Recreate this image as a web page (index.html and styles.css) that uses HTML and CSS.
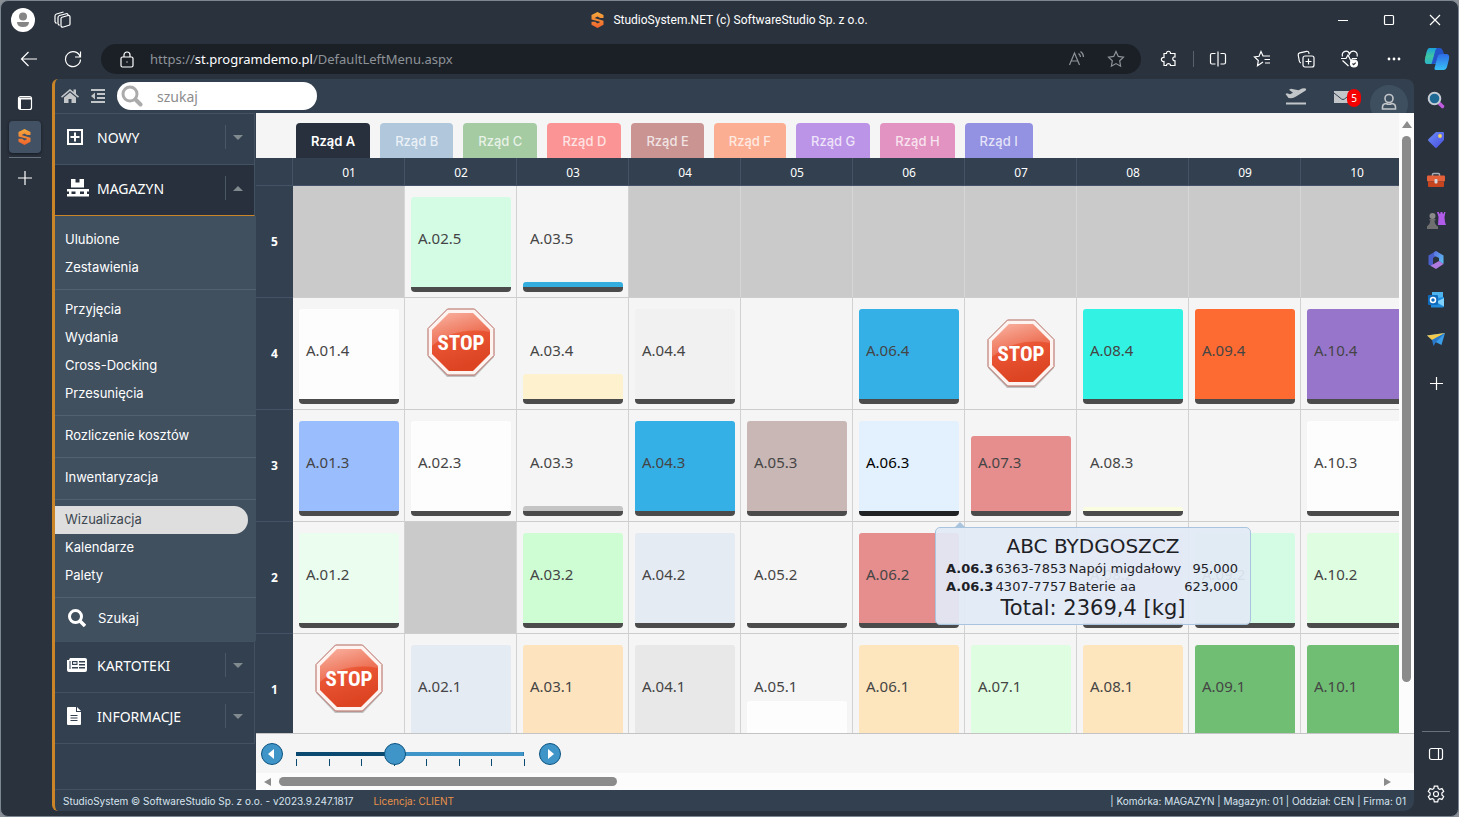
FILE: index.html
```html
<!DOCTYPE html>
<html lang="pl">
<head>
<meta charset="utf-8">
<title>StudioSystem.NET (c) SoftwareStudio Sp. z o.o.</title>
<link rel="stylesheet" href="styles.css">
</head>
<body>
<svg class="defs" width="0" height="0" aria-hidden="true">
  <defs>
    <linearGradient id="gOrange" x1="0" y1="0" x2="0" y2="1"><stop offset="0" stop-color="#f5a93c"/><stop offset="1" stop-color="#f0622d"/></linearGradient>
    <linearGradient id="gStop" x1="0" y1="0" x2="0.3" y2="1"><stop offset="0" stop-color="#f9a591"/><stop offset="0.5" stop-color="#ea5533"/><stop offset="1" stop-color="#dc4422"/></linearGradient>
    <linearGradient id="gCop1" x1="0" y1="0" x2="0" y2="1"><stop offset="0" stop-color="#1aa0dc"/><stop offset="0.5" stop-color="#3fc6a0"/><stop offset="1" stop-color="#2cb3c8"/></linearGradient>
    <linearGradient id="gCop2" x1="0" y1="0" x2="0" y2="1"><stop offset="0" stop-color="#2e6be8"/><stop offset="1" stop-color="#38c0f5"/></linearGradient>
    <linearGradient id="gTag" x1="0" y1="0" x2="1" y2="1"><stop offset="0" stop-color="#6a8cf5"/><stop offset="1" stop-color="#4a4fe0"/></linearGradient>
    <linearGradient id="gM365" x1="0" y1="0" x2="1" y2="1"><stop offset="0" stop-color="#5b6fe0"/><stop offset="1" stop-color="#5bc4f2"/></linearGradient>
    <symbol id="logo" viewBox="0 0 12 16"><path fill="url(#gOrange)" d="M6 0l6 3v3H8.500L6 4.600 3.600 5.800v.4L12 8.800v4L6 16l-6-3.200V9.800h3.600L6 11.400l2.400-1.200v-.4L0 7.400V3z"/></symbol>
    <symbol id="stop" viewBox="0 0 68 70">
      <path fill="#8d8d8d" opacity=".5" d="M20 3h28l19 19v27L48 69H20L1 49V22z"/>
      <path fill="#fdf3f0" stroke="#b3665c" d="M20.500 1h27L67 20.500v27L47.500 67h-27L1 47.500v-27z"/>
      <path fill="url(#gStop)" d="M22 5h24l17 17v24L46 63H22L5 46V22z"/>
      <path fill="#fff" opacity=".18" d="M22 5h24l17 17v2Q28 18 5 38V22z"/>
      <text class="stop-text" x="34" y="42" text-anchor="middle">STOP</text>
    </symbol>
  </defs>
</svg>
<div class="window">
  <header class="titlebar">
    <div class="title-left">
      <button class="profile" aria-label="Profil"><svg width="24" height="24" viewBox="0 0 24 24"><circle cx="12" cy="12" r="12" fill="#fff"/><circle cx="12" cy="8.500" r="4" fill="#858585"/><path fill="#858585" d="M6 14h12q0 5-6 5t-6-5z"/></svg></button>
      <button class="workspaces" aria-label="Obszary robocze"><svg class="line" width="18" height="18" viewBox="0 0 18 18"><path d="M7 7.500q0-1 1-1.300l6-1.700q2-.3 2 1.500v7q0 1-1 1.300l-5.500 1.700q-2.500.5-2.500-1.500zM4 13V6.500Q4 5 5.500 4.500L13 2.500M1 11V5q0-1.500 1.500-2l7-2M2.500 12.500L1 11M5.500 14.500L4 13M13 2.500q.8.500 1 1.500"/></svg></button>
    </div>
    <div class="title"><svg width="13" height="16"><use href="#logo"/></svg><span>StudioSystem.NET (c) SoftwareStudio Sp. z o.o.</span></div>
    <div class="win-buttons">
      <button aria-label="Minimalizuj"><svg class="line" width="12" height="12" viewBox="0 0 12 12"><path d="M1 6.500h10"/></svg></button>
      <button aria-label="Maksymalizuj"><svg class="line" width="12" height="12" viewBox="0 0 12 12"><rect x="1.500" y="1.500" width="9" height="9" rx="1"/></svg></button>
      <button aria-label="Zamknij"><svg class="line" width="12" height="12" viewBox="0 0 12 12"><path d="M1 1l10 10M11 1L1 11"/></svg></button>
    </div>
  </header>
  <nav class="toolbar">
    <button aria-label="Wstecz"><svg class="line" width="18" height="18" viewBox="0 0 18 18"><path d="M17 9H1.500M8.500 2l-7 7 7 7"/></svg></button>
    <button aria-label="Odśwież"><svg class="line" width="18" height="18" viewBox="0 0 18 18"><path d="M16.200 7A7.500 7.500 0 1 0 16.500 9.500M16.500 1.500V7H11"/></svg></button>
    <div class="address">
      <svg class="line" width="14" height="17" viewBox="0 0 14 17"><rect x="1" y="6" width="12" height="10" rx="1.500"/><path d="M4 6V4a3 3 0 0 1 6 0v2M7 10.500v1"/></svg>
      <span class="url">https://<b>st.programdemo.pl</b>/DefaultLeftMenu.aspx</span>
      <button class="dim" aria-label="Czytaj na głos"><svg class="line" width="18" height="18" viewBox="0 0 18 18"><path d="M1.500 15L6.500 3l5 12M3.200 11h6.600M10.500 3.500q2 1.500 2 3.500M12.500 1.500q3 2 3 5.500"/></svg></button>
      <button class="dim" aria-label="Dodaj do ulubionych"><svg class="line" width="18" height="18" viewBox="0 0 18 18"><path d="M9 1.500l2.300 4.900 5.200.7-3.800 3.700.9 5.400L9 13.600l-4.600 2.600.9-5.400L1.500 7.100l5.200-.7z"/></svg></button>
    </div>
    <button aria-label="Rozszerzenia"><svg class="line" width="18" height="18" viewBox="0 0 18 18"><path d="M4 3.500h2.500c-.5-3 4.500-3 4 0H15V7c-3-.5-3 4 0 3.800v4.700h-4.500c.3-2.500-4.300-2.500-4 0H4v-4c-3.500.5-3.500-4.500 0-4z"/></svg></button>
    <span class="tool-sep"></span>
    <button aria-label="Podziel ekran"><svg class="line" width="18" height="18" viewBox="0 0 18 18"><path d="M9 1.500v15M6.500 3.500H3q-1.500 0-1.500 1.500v7.500q0 1.500 1.500 1.500h3.500M11.500 3.500H15q1.500 0 1.500 1.500v7.500q0 1.500-1.500 1.500h-3.500"/></svg></button>
    <button aria-label="Ulubione strony"><svg class="line" width="18" height="18" viewBox="0 0 18 18"><path d="M10 12l-5.500 3.800.8-5.300L1.500 7l4.500-.7L8 1.500l2 4.500h7M11.500 9.500H17M12 13h5"/></svg></button>
    <button aria-label="Kolekcje"><svg class="line" width="18" height="18" viewBox="0 0 18 18"><rect x="6" y="6" width="11" height="11" rx="2"/><path d="M11.500 8.500v6M8.500 11.500h6M4 13Q2.500 12.500 2.300 11L1.200 5Q1 3.200 2.700 2.800L9.500 1.300q2-.3 2.400 1.500l.2 1"/></svg></button>
    <button aria-label="Podstawowe elementy przeglądarki"><svg class="line" width="20" height="18" viewBox="0 0 20 18"><path d="M2.500 6.500C1 .5 8-.5 9.500 4 11.500-.5 18.500.500 17 6.500M2.500 10.500l6 5.500M1 8.500h5l2-3.500 3 6 1.500-2.500H17"/><circle cx="14" cy="13.500" r="3.500" fill="#fff"/><path stroke="#2a323d" d="M12.500 13.500l1.200 1.200 2-2"/></svg></button>
    <button aria-label="Więcej"><svg width="16" height="4" viewBox="0 0 16 4"><circle cx="3" cy="2" r="1.400" fill="#fff"/><circle cx="8" cy="2" r="1.400" fill="#fff"/><circle cx="13" cy="2" r="1.400" fill="#fff"/></svg></button>
    <button class="copilot" aria-label="Copilot"><svg width="26" height="24" viewBox="0 0 26 24"><path fill="url(#gCop1)" d="M6 1h9q2 0 1.500 2L13 15q-.5 2-3 2H4Q0 17 1 12L3 4q.8-3 3-3z"/><path fill="#2455c8" d="M12 1h4q2 0 3 3l1 3h-3q-2 0-2.500 2l-2 6q-.5 2-3 2l-2 0z"/><path fill="url(#gCop2)" d="M17 7h5q4 0 3 5l-2 8q-.8 3-3 3h-8q-2 0-1.500-2L14 9q.5-2 3-2z"/><path fill="url(#gCop1)" d="M6 1h7q-2 1-2.500 4L8 14q-.8 3-3 3H4Q0 17 1 12L3 4q.8-3 3-3z"/></svg></button>
  </nav>
  <div class="stage">
    <aside class="rail rail-left">
      <button class="tab-action" aria-label="Karty pionowe"><svg class="line" width="16" height="16" viewBox="0 0 16 16"><rect x="1.500" y="1.500" width="13" height="13" rx="2"/><path stroke-width="2" d="M2 3.500h12M3 3v11"/></svg></button>
      <button class="tab-active" aria-label="StudioSystem"><svg width="13" height="16"><use href="#logo"/></svg></button>
      <hr>
      <button class="tab-new" aria-label="Nowa karta"><svg class="line" width="14" height="14" viewBox="0 0 14 14"><path d="M7 0v14M0 7h14"/></svg></button>
    </aside>

    <div class="app">
      <header class="app-bar">
        <a href="#" class="bar-icon" aria-label="Start"><svg width="18" height="16" viewBox="0 0 18 16"><path fill="#c3c6c9" d="M9 1L0 8.500l1 1.200L9 3l8 6.700 1-1.200-3-2.500V1.500h-2.500V4zM9 4.500L3 9.500V15h4.500v-4h3v4H15V9.500z"/></svg></a>
        <button class="bar-icon" aria-label="Zwiń menu"><svg width="16" height="14" viewBox="0 0 16 14"><path fill="#c3c6c9" d="M1 0h14v2H1zM7 4h8v2H7zM7 8h8v2H7zM1 12h14v2H1zM5 3.500v7L1 7z"/></svg></button>
        <label class="search"><svg width="22" height="22" viewBox="0 0 22 22"><circle cx="9" cy="9" r="7" fill="none" stroke="#ababab" stroke-width="3"/><path stroke="#ababab" stroke-width="4" stroke-linecap="round" d="M15 15l4.500 4.500"/></svg><input type="text" placeholder="szukaj" aria-label="szukaj"></label>
        <div class="bar-right">
          <a href="#" class="plane" aria-label="Wyloty"><svg width="22" height="17" viewBox="0 0 22 17"><path fill="#c3c6c9" d="M1 14.500h20v2H1zM.5 6l1.500-.8 3 1 3-1.400-4-3 2-1 7.500 1.500L17 .6q3-1 4 .2.500 1.500-1.500 2.500L11 8.500q-2.500 1.500-5 1.700l-2.500-.2z"/></svg></a>
          <a href="#" class="mail" aria-label="Wiadomości"><svg width="18" height="13" viewBox="0 0 18 13"><path fill="#c3c6c9" d="M0 1h18v12H0z"/><path fill="none" stroke="#32404f" d="M0 3l7.500 6q1.500 1 3 0L18 3"/></svg><span class="badge">5</span></a>
          <button class="user" aria-label="Użytkownik"><svg width="16" height="18" viewBox="0 0 16 18"><g fill="none" stroke="#c3c6c9" stroke-width="1.600"><circle cx="8" cy="5.500" r="4"/><path d="M1.500 16v-2q0-3 3.500-3.500 3 1.500 6 0 3.500.5 3.500 3.500v2z"/></g></svg></button>
        </div>
      </header>

      <div class="workspace">
        <nav class="menu">
          <button class="menu-head"><svg width="16" height="16" viewBox="0 0 16 16"><path fill="none" stroke="#fff" stroke-width="2" d="M1 1h14v14H1zM8 3.500v9M3.500 8h9"/></svg><span>NOWY</span><i class="arrow down"></i></button>
          <button class="menu-head open"><svg width="22" height="18" viewBox="0 0 22 18"><path fill="#fff" d="M4 0h4.500v3.500h4V0H17v8.500H4zM0 10h22v2.500h-2V15h2v2.500H0V15h2v-2.500H0z"/><path fill="#27303c" d="M4.500 12.500h4V15h-4zM13 12.500h4V15h-4z"/></svg><span>MAGAZYN</span><i class="arrow up"></i></button>
          <div class="submenu">
            <ul><li><a href="#">Ulubione</a></li><li><a href="#">Zestawienia</a></li></ul>
            <ul><li><a href="#">Przyjęcia</a></li><li><a href="#">Wydania</a></li><li><a href="#">Cross-Docking</a></li><li><a href="#">Przesunięcia</a></li></ul>
            <ul><li><a href="#">Rozliczenie kosztów</a></li></ul>
            <ul><li><a href="#">Inwentaryzacja</a></li></ul>
            <ul><li><a href="#" class="current">Wizualizacja</a></li><li><a href="#">Kalendarze</a></li><li><a href="#">Palety</a></li></ul>
            <a href="#" class="find"><svg width="18" height="18" viewBox="0 0 18 18"><circle cx="7.500" cy="7.500" r="6" fill="none" stroke="#fff" stroke-width="3"/><path stroke="#fff" stroke-width="3.500" d="M11.500 11.500l5.500 5.500"/></svg><span>Szukaj</span></a>
          </div>
          <button class="menu-head"><svg width="20" height="14" viewBox="0 0 20 14"><path fill="#fff" d="M3 0h15q2 0 2 2v10q0 2-2 2H2q-2 0-2-2V2h2z"/><path fill="#32404f" d="M2.500 3h1v8h-1zM5 3h5.500v4H5zM12 3h6v1.500h-6zM12 6h6v1.500h-6zM5 9h6v1.500H5zM12 9h6v1.500h-6z"/><path fill="#fff" d="M6 4.200h3.500v1.600H6z"/></svg><span>KARTOTEKI</span><i class="arrow down"></i></button>
          <button class="menu-head"><svg width="14" height="18" viewBox="0 0 14 18"><path fill="#fff" d="M1 0h8v5h5v12q0 1-1 1H1q-1 0-1-1V1q0-1 1-1zM10 0l4 4h-4z"/><path stroke="#32404f" d="M3.500 8.500h7M3.500 11h7M3.500 13.500h7"/></svg><span>INFORMACJE</span><i class="arrow down"></i></button>
        </nav>

        <main class="content">
          <div class="board">
            <div class="board-main">
              <div class="tabs" role="tablist">
                <button role="tab" aria-selected="true" class="tab a">Rząd A</button>
                <button role="tab" class="tab b">Rząd B</button>
                <button role="tab" class="tab c">Rząd C</button>
                <button role="tab" class="tab d">Rząd D</button>
                <button role="tab" class="tab e">Rząd E</button>
                <button role="tab" class="tab f">Rząd F</button>
                <button role="tab" class="tab g">Rząd G</button>
                <button role="tab" class="tab h">Rząd H</button>
                <button role="tab" class="tab i">Rząd I</button>
              </div>
              <div class="viewport">
                <table class="rack">
                  <colgroup><col class="level"><col span="10" class="slot"></colgroup>
                  <thead><tr><th></th><th>01</th><th>02</th><th>03</th><th>04</th><th>05</th><th>06</th><th>07</th><th>08</th><th>09</th><th>10</th></tr></thead>
                  <tbody>
                    <tr><th>5</th>
                      <td class="off"></td>
                      <td><div class="tile" style="--c:#d4fce5;--f:90px"><span>A.02.5</span></div></td>
                      <td><div class="tile" style="--c:#34aedf;--f:5px"><span>A.03.5</span></div></td>
                      <td class="off"></td><td class="off"></td><td class="off"></td><td class="off"></td><td class="off"></td><td class="off"></td><td class="off"></td></tr>
                    <tr><th>4</th>
                      <td><div class="tile" style="--c:#fdfdfd;--f:90px"><span>A.01.4</span></div></td>
                      <td><svg class="stop" role="img" aria-label="STOP"><use href="#stop"/></svg></td>
                      <td><div class="tile" style="--c:#fdf2cd;--f:25px"><span>A.03.4</span></div></td>
                      <td><div class="tile" style="--c:#f1f1f1;--f:90px"><span>A.04.4</span></div></td>
                      <td></td>
                      <td><div class="tile" style="--c:#34b0e6;--f:90px"><span>A.06.4</span></div></td>
                      <td><svg class="stop low" role="img" aria-label="STOP"><use href="#stop"/></svg></td>
                      <td><div class="tile" style="--c:#32f2e3;--f:90px"><span>A.08.4</span></div></td>
                      <td><div class="tile" style="--c:#fd6b32;--f:90px"><span>A.09.4</span></div></td>
                      <td><div class="tile" style="--c:#9775cb;--f:90px"><span>A.10.4</span></div></td></tr>
                    <tr><th>3</th>
                      <td><div class="tile" style="--c:#99bdfd;--f:90px"><span>A.01.3</span></div></td>
                      <td><div class="tile" style="--c:#fdfdfd;--f:90px"><span>A.02.3</span></div></td>
                      <td><div class="tile" style="--c:#c4c4c4;--f:5px"><span>A.03.3</span></div></td>
                      <td><div class="tile" style="--c:#34b0e6;--f:90px"><span>A.04.3</span></div></td>
                      <td><div class="tile" style="--c:#c8b7b4;--f:90px"><span>A.05.3</span></div></td>
                      <td class="hovered"><div class="tile" style="--c:#e2f1fd;--f:90px"><span>A.06.3</span></div>
                        <div class="tip" role="tooltip">
                          <p>ABC BYDGOSZCZ</p>
                          <table>
                            <tr><th>A.06.3</th><td>6363-7853</td><td>Napój migdałowy</td><td class="num">95,000</td></tr>
                            <tr><th>A.06.3</th><td>4307-7757</td><td>Baterie aa</td><td class="num">623,000</td></tr>
                          </table>
                          <p class="total">Total: 2369,4 [kg]</p>
                        </div></td>
                      <td><div class="tile" style="--c:#e68d8d;--f:75px"><span>A.07.3</span></div></td>
                      <td><div class="tile" style="--c:#fafde0;--f:4px"><span>A.08.3</span></div></td>
                      <td></td>
                      <td><div class="tile" style="--c:#fdfdfd;--f:90px"><span>A.10.3</span></div></td></tr>
                    <tr><th>2</th>
                      <td><div class="tile" style="--c:#eafdef;--f:90px"><span>A.01.2</span></div></td>
                      <td class="off"></td>
                      <td><div class="tile" style="--c:#cefdd4;--f:90px"><span>A.03.2</span></div></td>
                      <td><div class="tile" style="--c:#e5ebf3;--f:90px"><span>A.04.2</span></div></td>
                      <td><div class="tile" style="--c:#f5f5f5;--f:0px"><span>A.05.2</span></div></td>
                      <td><div class="tile" style="--c:#e68d8d;--f:90px"><span>A.06.2</span></div></td>
                      <td></td>
                      <td><div class="tile" style="--c:#f9eef2;--f:90px"><span>A.08.2</span></div></td>
                      <td><div class="tile" style="--c:#d4fce5;--f:90px"><span>A.09.2</span></div></td>
                      <td><div class="tile" style="--c:#dffde0;--f:90px"><span>A.10.2</span></div></td></tr>
                    <tr><th>1</th>
                      <td><svg class="stop" role="img" aria-label="STOP"><use href="#stop"/></svg></td>
                      <td><div class="tile" style="--c:#e5ebf3;--f:90px"><span>A.02.1</span></div></td>
                      <td><div class="tile" style="--c:#fde4bf;--f:90px"><span>A.03.1</span></div></td>
                      <td><div class="tile" style="--c:#e8e8e8;--f:90px"><span>A.04.1</span></div></td>
                      <td><div class="tile" style="--c:#fdfdfd;--f:34px"><span>A.05.1</span></div></td>
                      <td><div class="tile" style="--c:#fde6bd;--f:90px"><span>A.06.1</span></div></td>
                      <td><div class="tile" style="--c:#dffde0;--f:90px"><span>A.07.1</span></div></td>
                      <td><div class="tile" style="--c:#fde6bd;--f:90px"><span>A.08.1</span></div></td>
                      <td><div class="tile" style="--c:#70be73;--f:90px"><span>A.09.1</span></div></td>
                      <td><div class="tile" style="--c:#70be73;--f:90px"><span>A.10.1</span></div></td></tr>
                  </tbody>
                </table>
              </div>
            </div>
            <div class="vscroll"><i class="cap"></i><div class="thumb"></div></div>
          </div>
          <div class="zoombar">
            <button class="round" aria-label="Zmniejsz"><svg width="8" height="10" viewBox="0 0 8 10"><path fill="#fff" d="M6 0v10L0 5z"/></svg></button>
            <div class="range"><input type="range" min="0" max="7" value="3" aria-label="Powiększenie"><div class="ticks"><i></i><i></i><i></i><i></i><i></i><i></i><i></i><i></i></div></div>
            <button class="round" aria-label="Powiększ"><svg width="8" height="10" viewBox="0 0 8 10"><path fill="#fff" d="M2 0v10l6-5z"/></svg></button>
          </div>
          <div class="hscroll"><i class="cap left"></i><div class="lane"><div class="thumb"></div></div><i class="cap right"></i></div>
        </main>
      </div>

      <footer class="status">
        <span>StudioSystem © SoftwareStudio Sp. z o.o. - v2023.9.247.1817</span>
        <span class="licence">Licencja: CLIENT</span>
        <span class="where">| Komórka: MAGAZYN | Magazyn: 01 | Oddział: CEN | Firma: 01</span>
      </footer>
    </div>

    <aside class="rail rail-right">
      <button aria-label="Szukaj"><svg width="18" height="18" viewBox="0 0 18 18"><path stroke="#c05be0" stroke-width="3.500" stroke-linecap="round" d="M12.500 12.500l3 3"/><circle cx="7.500" cy="7.500" r="5.800" fill="#1e6a94" stroke="#c4ccd4" stroke-width="2"/></svg></button>
      <button aria-label="Zakupy"><svg width="18" height="18" viewBox="0 0 18 18"><path fill="url(#gTag)" d="M9 1h7q1 0 1 1v7l-7 7.500q-1 .8-2 0L1.500 10q-1-1 0-2z"/><circle cx="13" cy="5" r="1.900" fill="#f8d45c"/></svg></button>
      <button aria-label="Narzędzia"><svg width="18" height="18" viewBox="0 0 18 18"><path fill="none" stroke="#a7adb3" stroke-width="1.500" d="M5.500 5V3.500Q5.500 2.500 6.500 2.500h5q1 0 1 1V5"/><rect y="4.500" width="18" height="6" rx="1" fill="#e5613a"/><path fill="#c8441f" d="M1 10.500h16V15q0 1-1 1H2q-1 0-1-1z"/><rect x="7.500" y="8" width="3" height="4.500" rx="1" fill="#d5d8dc"/></svg></button>
      <button aria-label="Gry"><svg width="20" height="18" viewBox="0 0 20 18"><path fill="#b05ce8" d="M11 1h2v1.500h1.500V1h2v1.500H18V1h1.500L18.500 6l.5 5 1 3h-8l.5-8z"/><circle cx="6.500" cy="5" r="3" fill="#8a8a8a"/><path fill="#6f6f6f" d="M3.500 8h6v1.500h-1q0 4 3.500 6V18H1v-2.500q3-2 3.500-6h-1z"/></svg></button>
      <button aria-label="Microsoft 365"><svg width="18" height="18" viewBox="0 0 18 18"><path fill="#4a5fc9" d="M9 0L1.500 4.500v9L6 16V7l5-3z"/><path fill="url(#gM365)" d="M7 1.200L9 0l7.500 4.500V13L12 10V7L7 4.500z"/><path fill="#b07be0" d="M16.500 13L9 18l-5.500-3.300L12 10z"/></svg></button>
      <button aria-label="Outlook"><svg width="18" height="18" viewBox="0 0 18 18"><path fill="#4db4f0" d="M5 1h11v8H5z"/><path fill="#1f8bdc" d="M4 8l13-2v9q0 1.500-1.500 1.500H4z"/><path fill="#7fd0fa" d="M17 7v8.500L9 11z"/><rect x="1" y="4" width="10" height="10" rx="1" fill="#0f6cbd"/><circle cx="6" cy="9" r="2.500" fill="none" stroke="#fff" stroke-width="1.500"/></svg></button>
      <button aria-label="Upuść"><svg width="18" height="16" viewBox="0 0 18 16"><path fill="#3a9de8" d="M0 3.500L18 1l-3.500 12-6-3z"/><path fill="#f2c94c" d="M0 3.500L18 1 5 8z"/><path fill="#2a78c8" d="M5 8l13-7L9 10l-2.500 4z"/></svg></button>
      <button aria-label="Dostosuj"><svg class="line" width="13" height="13" viewBox="0 0 13 13"><path d="M6.500 0v13M0 6.500h13"/></svg></button>
      <hr>
      <button aria-label="Ukryj pasek boczny"><svg class="line" width="16" height="14" viewBox="0 0 16 14"><rect x="1.500" y="1.500" width="13" height="11" rx="2"/><path d="M10.500 1.500v11"/></svg></button>
      <button aria-label="Ustawienia"><svg class="line" width="18" height="18" viewBox="0 0 18 18"><circle cx="9" cy="9" r="2.500"/><path d="M7.300 1.200h3.400l.5 2.300 1.500.9 2.300-.8 1.700 2.900-1.800 1.600v1.800l1.800 1.600-1.700 2.900-2.300-.8-1.500.9-.5 2.300H7.300l-.5-2.300-1.500-.9-2.300.8-1.700-2.900 1.800-1.600V8.100L1.300 6.500 3 3.600l2.300.8 1.500-.9z"/></svg></button>
    </aside>
  </div>
</div>
</body>
</html>
```

FILE: styles.css
```css
* { box-sizing: border-box; }
body { margin: 0; background: #8b9096; font-family: "Noto Sans", sans-serif; color: #fff; }
button { font: inherit; color: inherit; background: none; border: 0; padding: 0; display: flex; align-items: center; justify-content: center; }
a { color: inherit; text-decoration: none; }
ul { list-style: none; margin: 0; padding: 0; }
hr { border: 0; border-top: 1px solid #68717b; margin: 0; }
svg { flex: none; display: block; }
.defs { position: absolute; }
.line { fill: none; stroke: #fff; stroke-width: 1.2; }

.window { height: 100vh; display: flex; flex-direction: column; background: #2a323d; border: 1px solid #7d8791; border-radius: 8px; overflow: hidden; }

/* browser chrome */
.titlebar { height: 38px; flex: none; display: grid; grid-template-columns: 1fr auto 1fr; align-items: center; }
.title-left { display: flex; gap: 19px; padding-left: 10px; align-items: center; }
.title { display: flex; align-items: center; gap: 9px; font: 12px Roboto, sans-serif; }
.win-buttons { display: flex; justify-content: flex-end; }
.win-buttons button { width: 46px; height: 38px; }
.toolbar { height: 40px; flex: none; display: flex; align-items: center; padding-left: 6px; }
.toolbar button { width: 44px; height: 32px; }
.toolbar .copilot { width: 42px; }
.toolbar .address { flex: 1; height: 30px; display: flex; align-items: center; margin: 0 6px; padding: 0 6px 0 19px; background: #1b2027; border-radius: 15px; }
.address .url { flex: 1; padding-left: 16px; font-size: 13px; color: #8e9398; }
.address b { color: #fff; font-weight: 400; }
.address .dim { width: 39px; }
.address .dim .line { stroke: #8e9398; }
.tool-sep { width: 1px; height: 16px; margin: 0 2px; background: #59616b; }

.stage { flex: 1; min-height: 0; display: flex; }
.rail { flex: none; display: flex; flex-direction: column; align-items: center; }
.rail-left { width: 51px; padding-right: 4px; }
.rail-left .tab-action { width: 32px; height: 32px; margin-top: 8px; }
.rail-left .tab-active { width: 32px; height: 32px; margin-top: 2px; background: #435164; border-radius: 4px; box-shadow: 0 1px 3px #151a20; }
.rail-left hr { width: 32px; margin: 4px 0; }
.rail-left .tab-new { width: 32px; height: 32px; }
.rail-right { width: 44px; padding-top: 1px; }
.rail-right button { width: 40px; height: 40px; flex: none; }
.rail-right hr { width: 28px; margin-top: auto; margin-bottom: 2px; }
.rail-right button:nth-child(8) { margin-top: 3px; }
.rail-right button:last-child { margin-bottom: 2px; }

/* application */
.app { flex: 1; min-width: 0; display: flex; flex-direction: column; margin-bottom: 5px; background: #32404f; border-left: 3px solid #c98528; border-radius: 6px 8px 10px 6px; overflow: hidden; }
.app-bar { height: 34px; flex: none; display: flex; align-items: center; padding-left: 6px; }
.bar-icon { width: 18px; margin-right: 10px; }
.search { width: 200px; height: 28px; display: flex; align-items: center; padding-left: 4px; gap: 14px; background: #fff; border-radius: 14px; }
.search input { width: 140px; border: 0; outline: 0; padding: 1px 0 0; background: none; font: 14px "Noto Sans", sans-serif; color: #333; }
.search input::placeholder { color: #8c8c8c; opacity: 1; }
.bar-right { margin-left: auto; align-self: stretch; display: flex; align-items: center; }
.plane { margin-right: 27px; }
.mail { display: flex; align-items: center; }
.badge { margin-left: -5px; width: 14px; height: 18px; border-radius: 7px; background: #f50000; font-size: 10px; line-height: 18px; text-align: center; position: relative; top: 2px; }
.user { width: 38px; height: 38px; margin: 6px 6px 0 9px; align-self: flex-start; border-radius: 50%; background: #3e4f60; }
.user svg { margin-top: -4px; }
.workspace { flex: 1; min-height: 0; display: flex; }

.menu { width: 201px; flex: none; border-bottom: 1px solid #435261; overflow: hidden; }
.menu-head { width: 200px; height: 51px; justify-content: flex-start; padding: 0 0 4px 12px; border: solid #435261; border-width: 1px 1px 0 0; font-size: 14px; }
.menu-head:last-child { height: 52px; border-bottom-width: 1px; }
.menu-head svg { margin-right: auto; }
.menu-head span { width: 128px; text-align: left; }
.menu-head.open { height: 52px; background: #27303c; border-bottom: 1px solid #c98528; }
.arrow { width: 29px; height: 24px; border-left: 1px solid #4a5866; display: flex; align-items: center; padding-left: 7px; }
.arrow::before { content: ""; border: 5px solid transparent; }
.arrow.down::before { border-top-color: #818a8f; border-bottom: 0; }
.arrow.up::before { border-bottom-color: #818a8f; border-top: 0; }
.submenu { background: #40505f; font: 13px Inter, sans-serif; }
.submenu ul { padding: 6px 8px 7px 0; border-bottom: 1px solid #52616f; }
.submenu ul:first-child { padding-top: 10px; }
.submenu li a { display: block; height: 28px; line-height: 27px; padding-left: 10px; }
.submenu .current { background: #dedede; color: #3c4650; border-radius: 0 14px 14px 0; }
.find { height: 43px; display: flex; align-items: center; gap: 12px; padding: 0 0 4px 13px; }

.content { flex: 1; min-width: 0; display: flex; flex-direction: column; background: #f5f5f5; }
.board { flex: 1; min-height: 0; display: flex; border-bottom: 1px solid #c4c4c4; }
.board-main { flex: 1; min-width: 0; display: flex; flex-direction: column; }
.tabs { display: flex; gap: 10px; padding: 10px 0 0 40px; }
.tab { height: 35px; padding: 0 15px; border-radius: 4px 4px 0 0; font: 500 13px Inter, sans-serif; color: rgba(255,255,255,.75); }
.tab.a { background: #27303c; color: #fff; font-weight: 600; }
.tab.b { background: #b0c7dc; }
.tab.c { background: #a4cba2; }
.tab.d { background: #fb9595; }
.tab.e { background: #c99492; }
.tab.f { background: #fcae92; }
.tab.g { background: #bb94e7; }
.tab.h { background: #e293c1; }
.tab.i { background: #9391e1; }
.viewport { flex: 1; min-height: 0; overflow: hidden; }
.rack { width: 1157px; table-layout: fixed; border-collapse: separate; border-spacing: 0; }
.level { width: 37px; }
.slot { width: 112px; }
.rack > thead th { height: 28px; padding: 1px 0 0 1px; background: #32404f; border-right: 1px solid #435266; border-bottom: 1px solid #435266; font-size: 12px; font-weight: 400; }
.rack > tbody > tr > th { height: 112px; padding: 0; background: #32404f; border-bottom: 1px solid #435266; font-size: 12px; font-weight: 700; }
.rack > tbody > tr > td { height: 112px; padding: 11px 5px 5px 6px; border-right: 1px solid #d2d2d2; border-bottom: 1px solid #cdcdcd; vertical-align: top; }
.rack > tbody > tr > td.off { background: #cacaca; border-right-color: #d6d6d6; }
.tile { height: 95px; display: grid; border-bottom: 5px solid #4b4b4b; border-radius: 4px; color: #454545; font-size: 15px; }
.tile::before { content: ""; grid-area: 1 / 1; align-self: end; height: var(--f); background: var(--c); border-radius: 3px 3px 0 0; }
.tile span { grid-area: 1 / 1; align-self: center; padding: 0 0 8px 7px; }
.hovered { position: relative; }
.hovered .tile { color: #000; border-bottom-color: #202224; }
.stop { width: 68px; height: 70px; margin: -1px auto 0; }
.stop.low { margin-top: 10px; }
.stop-text { font: 700 21px "Liberation Sans Narrow", "Roboto Condensed", Roboto, sans-serif; fill: #fff; }

.tip { position: absolute; z-index: 2; left: 82px; top: 117px; width: 316px; padding: 6px 9px 4px; background: rgba(225,233,245,.93); border: 1px solid #a9c4de; border-radius: 5px; color: #1d2126; font: 13px "DejaVu Sans", sans-serif; }
.tip::before { content: ""; position: absolute; left: 19px; top: -6px; border: 5px solid transparent; border-top: 0; border-bottom-color: #a9c4de; }
.tip p { margin: 0; font-size: 20px; line-height: 24px; text-align: center; }
.tip .total { font-size: 21px; }
.tip table { width: 100%; margin-top: 2px; border-collapse: collapse; line-height: 18px; }
.tip th, .tip td { padding: 0 1px; text-align: left; white-space: nowrap; }
.tip .num { padding-right: 3px; text-align: right; }

.vscroll { width: 15px; padding: 8px 3px 51px; background: #fcfcfc; display: flex; flex-direction: column; align-items: center; }
.cap { border: 5px solid transparent; border-top: 0; border-bottom: 7px solid #8b8b8b; flex: none; }
.cap.left { border: 4px solid transparent; border-left: 0; border-right: 7px solid #8b8b8b; }
.cap.right { border: 4px solid transparent; border-right: 0; border-left: 7px solid #8b8b8b; }
.vscroll .thumb { flex: 1; width: 9px; margin-top: 8px; background: #8b8b8b; border-radius: 5px; }
.zoombar { height: 39px; flex: none; display: flex; align-items: center; padding-left: 5px; }
.round { width: 22px; height: 22px; border: 1px solid #0b5480; border-radius: 50%; background: #3f94c8; }
.range { width: 230px; display: grid; margin: 0 13px; }
.range > * { grid-area: 1 / 1; }
.range input { appearance: none; width: 228px; height: 22px; margin: 0; background: linear-gradient(#3f94c8, #3f94c8) no-repeat 100% 50% / 56% 4px, linear-gradient(#0b4a70, #0b4a70) no-repeat 0 50% / 100% 4px; z-index: 1; }
.range input::-webkit-slider-thumb { appearance: none; width: 22px; height: 22px; border: 1px solid #0b5480; border-radius: 50%; background: #3f94c8; }
.ticks { display: flex; justify-content: space-between; align-self: end; width: 229px; margin-bottom: -1px; }
.ticks i { width: 1px; height: 7px; background: #0b4a70; }
.hscroll { height: 17px; flex: none; display: flex; align-items: center; padding: 0 23px 0 8px; background: #fcfcfc; }
.lane { flex: 1; padding: 0 16px 0 8px; }
.lane .thumb { width: 31%; height: 9px; background: #8b8b8b; border-radius: 5px; }

.status { height: 21px; flex: none; display: flex; align-items: center; gap: 20px; padding: 0 8px; font: 10px Inter, sans-serif; color: #d8e4f0; }
.licence { color: #e8914a; }
.where { margin-left: auto; }
```
